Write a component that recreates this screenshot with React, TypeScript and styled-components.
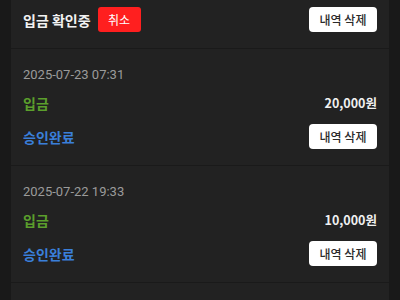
import React from 'react';
import styled, { createGlobalStyle } from 'styled-components';

const GlobalStyle = createGlobalStyle`
  html, body {
    margin: 0;
    padding: 0;
    background: #191919;
  }
  body {
    font-family: Roboto, "Noto Sans CJK KR", sans-serif;
  }
`;

const Page = styled.div`
  width: 400px;
  height: 300px;
  overflow: hidden;
  padding: 0 11px;
  box-sizing: border-box;
  background: #191919;
`;

const Panel = styled.div`
  background: #222222;
  height: 100%;
`;

const Header = styled.div`
  display: flex;
  align-items: center;
  gap: 7px;
  padding: 7px 12px 16px;
  border-bottom: 1px solid #1a1a1a;
`;

const Title = styled.span`
  font-family: "Noto Sans CJK KR", sans-serif;
  font-size: 14px;
  font-weight: 700;
  color: #f2f2f2;
`;

const CancelButton = styled.button`
  width: 43px;
  height: 25px;
  border: none;
  border-radius: 3px;
  background: #ff1f1f;
  color: #fff;
  font-family: "Noto Sans CJK KR", sans-serif;
  font-size: 12px;
  padding: 0;
`;

const Spacer = styled.div`
  flex: 1;
`;

const DeleteButton = styled.button`
  width: 68px;
  height: 25px;
  border: none;
  border-radius: 4px;
  background: #ffffff;
  color: #2a2a2a;
  font-family: "Noto Sans CJK KR", sans-serif;
  font-size: 12px;
  font-weight: 500;
  padding: 0;
`;

const Entry = styled.div`
  display: flex;
  flex-direction: column;
  padding: 17px 12px 16px;
  border-bottom: 1px solid #1a1a1a;
`;

const DateText = styled.div`
  font-family: Roboto, sans-serif;
  font-size: 13px;
  line-height: 18px;
  color: #9b9b9b;
  margin-bottom: 10px;
`;

const Line = styled.div<{ $gap?: number }>`
  display: flex;
  align-items: center;
  justify-content: space-between;
  margin-bottom: ${p => p.$gap ?? 0}px;
`;

const Label = styled.span<{ $color: string }>`
  font-family: "Noto Sans CJK KR", sans-serif;
  font-size: 14px;
  font-weight: 700;
  line-height: 18px;
  color: ${p => p.$color};
`;

const Amount = styled.span`
  font-family: "Noto Sans CJK KR", sans-serif;
  font-size: 12.5px;
  font-weight: 700;
  line-height: 18px;
  color: #f0f0f0;
`;

const entries = [
  { date: '2025-07-23 07:31', amount: '20,000원' },
  { date: '2025-07-22 19:33', amount: '10,000원' },
];

export default function App() {
  return (
    <>
      <GlobalStyle />
      <Page>
        <Panel>
          <Header>
            <Title>입금 확인중</Title>
            <CancelButton>취소</CancelButton>
            <Spacer />
            <DeleteButton>내역 삭제</DeleteButton>
          </Header>
          {entries.map(e => (
            <Entry key={e.date}>
              <DateText>{e.date}</DateText>
              <Line $gap={12}>
                <Label $color="#5b9f2c">입금</Label>
                <Amount>{e.amount}</Amount>
              </Line>
              <Line>
                <Label $color="#3a7fd9">승인완료</Label>
                <DeleteButton>내역 삭제</DeleteButton>
              </Line>
            </Entry>
          ))}
        </Panel>
      </Page>
    </>
  );
}
